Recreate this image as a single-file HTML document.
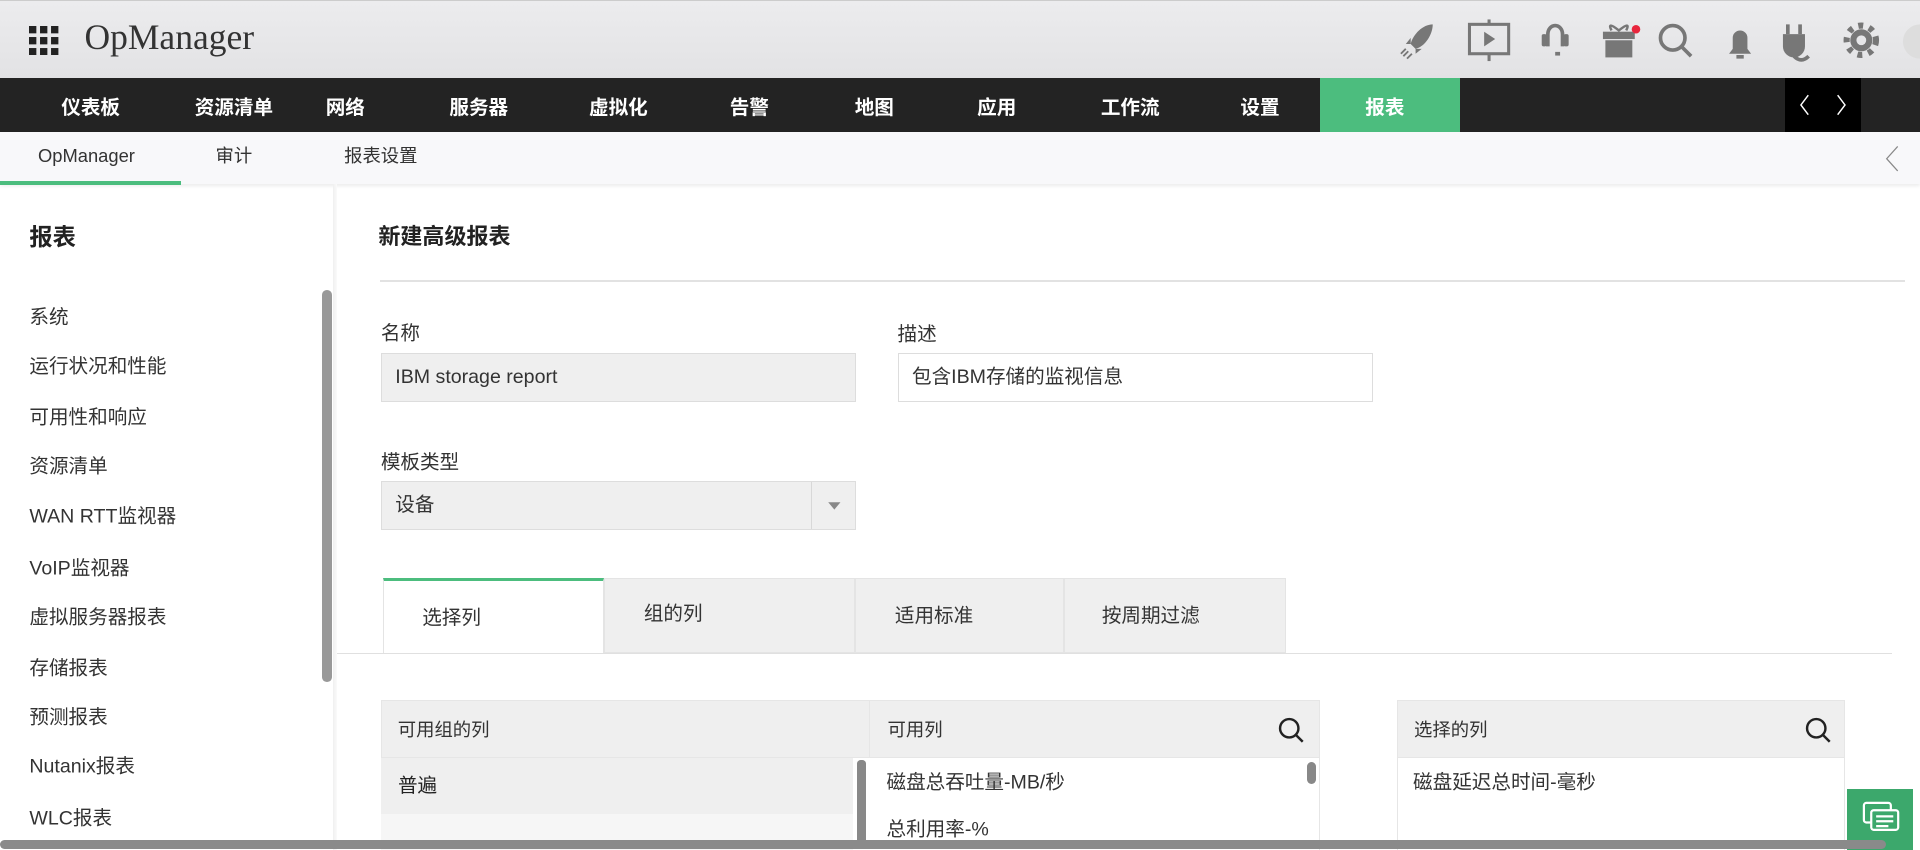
<!DOCTYPE html>
<html><head><meta charset="utf-8"><style>
html,body{margin:0;padding:0;overflow:hidden;background:#fff}
body{width:1920px;height:850px}
#r{zoom:1.22449;width:1568px;height:694px;position:relative;overflow:hidden;font-family:"Liberation Sans","Noto Sans CJK SC",sans-serif;color:#222}
.a{position:absolute}
.hdr{left:0;top:0;width:1568px;height:64px;background:linear-gradient(#ececee,#e2e2e4);border-top:1px solid #ccc}
.nav{left:0;top:64px;width:1568px;height:44px;background:#232323}
.nav span{position:absolute;top:3px;line-height:44px;color:#fff;font-size:16px;transform:translateX(-50%);font-weight:bold}
.sub{left:0;top:108px;width:1568px;height:42px;background:#f8f8fa;box-shadow:0 2px 3px rgba(0,0,0,.08)}
.sub span{position:absolute;top:0;line-height:40px;font-size:15px;color:#333}
.side span{position:absolute;left:24px;font-size:16px;color:#333;transform:translateY(-50%)}
.lbl{font-size:16px;color:#333;transform:translateY(-50%)}
.inp{height:40px;box-sizing:border-box;border:1px solid #ddd;font-size:16px;line-height:38px;padding-left:11px;color:#333}
.tab{top:472px;height:61px;background:#efefef;border:1px solid #e4e4e4;box-sizing:border-box;font-size:16px;color:#333;line-height:62px}
.th{background:#efefef;height:47px;line-height:47px;font-size:15px;color:#333;box-sizing:border-box;border:1px solid #e6e6e6}
</style></head><body><div id="r">
<div class="a hdr"></div>
<svg class="a" style="left:24px;top:21px" width="26" height="24"><g fill="#222"><rect x="0" y="0" width="6" height="6"/><rect x="9" y="0" width="6" height="6"/><rect x="18" y="0" width="6" height="6"/><rect x="0" y="9" width="6" height="6"/><rect x="9" y="9" width="6" height="6"/><rect x="18" y="9" width="6" height="6"/><rect x="0" y="18" width="6" height="6"/><rect x="9" y="18" width="6" height="6"/><rect x="18" y="18" width="6" height="6"/></g></svg>
<div class="a" style="left:69px;top:13px;font-family:'Liberation Serif',serif;font-size:29px;color:#333">OpManager</div>
<svg class="a" style="left:1140px;top:14px" width="430" height="40" fill="#777" stroke="#777">
<path d="M30 6 C22 6 14 14 12 22 L16 26 C24 24 30 14 30 6Z M12 22 L8 22 L12 17Z M16 26 L16 30 L21 26Z" stroke="none"/>
<path d="M10 28 L6 32 M13 30 L9 34 M8 26 L4 30" stroke-width="1.5"/>
<g fill="none" stroke-width="2.5"><rect x="60" y="6" width="32" height="24"/><line x1="76" y1="2" x2="76" y2="6"/><line x1="76" y1="30" x2="76" y2="36"/></g><path d="M72 12 L81 18 L72 24Z" stroke="none"/>
<g fill="none" stroke-width="3"><path d="M124 24 V14 a6 7 0 0 1 12 0 V24"/><path d="M130 30 h4"/></g><rect x="119" y="14" width="4" height="10" rx="1.5" stroke="none"/><rect x="137" y="14" width="4" height="10" rx="1.5" stroke="none"/>
<rect x="169" y="12" width="26" height="6" stroke="none"/><rect x="171" y="19" width="22" height="14" stroke="none"/><path d="M176 11 q-4 -8 6 0 q10 -8 6 0" fill="none" stroke-width="2"/><circle cx="196" cy="10" r="3.5" fill="#e8263d" stroke="none"/>
<g fill="none" stroke-width="3"><circle cx="226" cy="17" r="10"/><line x1="233" y1="24" x2="241" y2="32"/></g>
<path d="M272 30 h18 l-3 -4 v-9 a6 6 0 0 0 -12 0 v9z M278 31 h6 v3 h-6z" stroke="none"/>
<path d="M320 6 v8 M330 6 v8 M325 32 q6 6 12 0" stroke-width="3" fill="none"/><path d="M316 14 h18 v10 a9 9 0 0 1 -18 0z" stroke="none"/>
<circle cx="380" cy="19" r="9" stroke="none"/><circle cx="380" cy="19" r="12" fill="none" stroke-width="5" stroke-dasharray="4 5"/><circle cx="380" cy="19" r="4" fill="#e6e6e8" stroke="none"/>
<circle cx="428" cy="20" r="14" fill="#ddd" stroke="none"/>
</svg>
<div class="a nav"><span style="left:74px">仪表板</span><span style="left:191px">资源清单</span><span style="left:282px">网络</span><span style="left:391px">服务器</span><span style="left:505px">虚拟化</span><span style="left:612px">告警</span><span style="left:714px">地图</span><span style="left:814px">应用</span><span style="left:923px">工作流</span><span style="left:1029px">设置</span>
<div class="a" style="left:1078px;top:0;width:114px;height:44px;background:#4cbd7e"></div><span style="left:1131px">报表</span>
<div class="a" style="left:1458px;top:0;width:62px;height:44px;background:#000"></div>
<svg class="a" style="left:1458px;top:0" width="62" height="44" fill="none" stroke="#fff" stroke-width="1.2"><path d="M19 14 L13 22 L19 30 M43 14 L49 22 L43 30"/></svg></div>
<div class="a sub"><span style="left:31px">OpManager</span><span style="left:176px">审计</span><span style="left:281px">报表设置</span>
<div class="a" style="left:0;top:40px;width:148px;height:3px;background:#4cbd7e"></div>
<svg class="a" style="left:1538px;top:10px" width="14" height="24" fill="none" stroke="#888"><path d="M12 2 L3 12 L12 22"/></svg></div>
<div class="a side" style="left:0;top:150px;width:272px;height:544px">
<div class="a" style="left:24px;top:28px;font-size:19px;font-weight:bold">报表</div>
<span style="top:107px">系统</span><span style="top:147px">运行状况和性能</span><span style="top:189px">可用性和响应</span><span style="top:229px">资源清单</span><span style="top:270px">WAN RTT监视器</span><span style="top:312px">VoIP监视器</span><span style="top:352px">虚拟服务器报表</span><span style="top:394px">存储报表</span><span style="top:434px">预测报表</span><span style="top:474px">Nutanix报表</span><span style="top:516px">WLC报表</span>
<div class="a" style="left:263px;top:87px;width:8px;height:320px;background:#999;border-radius:4px"></div></div>
<div class="a" style="left:272px;top:150px;width:3px;height:544px;background:linear-gradient(90deg,#f0f0f0,#fafafa)"></div>
<div class="a" style="left:309px;top:179px;font-size:18px;font-weight:bold">新建高级报表</div>
<div class="a" style="left:310px;top:229px;width:1246px;height:1px;background:#e2e2e2"></div>
<div class="a lbl" style="left:311px;top:270px">名称</div><div class="a lbl" style="left:733px;top:271px">描述</div>
<div class="a inp" style="left:311px;top:288px;width:388px;background:#efefef">IBM storage report</div>
<div class="a inp" style="left:733px;top:288px;width:388px;background:#fff">包含IBM存储的监视信息</div>
<div class="a lbl" style="left:311px;top:376px">模板类型</div>
<div class="a inp" style="left:311px;top:393px;width:388px;background:#efefef">设备</div>
<div class="a" style="left:662px;top:394px;width:1px;height:38px;background:#d8d8d8"></div>
<svg class="a" style="left:675px;top:409px" width="12" height="8"><path d="M1 1 L11 1 L6 7Z" fill="#888"/></svg>
<div class="a" style="left:275px;top:533px;width:1270px;height:1px;background:#e0e0e0"></div>
<div class="a tab" style="left:313px;width:180px;background:#fff;border-bottom:none;border-top:3px solid #4cbd7e;padding-left:31px">选择列</div>
<div class="a tab" style="left:493px;width:205px;padding-left:32px;line-height:58px">组的列</div>
<div class="a tab" style="left:698px;width:171px;padding-left:32px">适用标准</div>
<div class="a tab" style="left:869px;width:181px;padding-left:30px">按周期过滤</div>
<div class="a th" style="left:311px;top:572px;width:400px;padding-left:13px">可用组的列</div>
<div class="a th" style="left:710px;top:572px;width:368px;padding-left:14px">可用列</div>
<div class="a th" style="left:1141px;top:572px;width:366px;padding-left:13px">选择的列</div>
<svg class="a" style="left:1043px;top:585px" width="24" height="24" fill="none" stroke="#222" stroke-width="2"><circle cx="10" cy="10" r="7.5"/><line x1="15.5" y1="15.5" x2="21" y2="21"/></svg>
<svg class="a" style="left:1473px;top:585px" width="24" height="24" fill="none" stroke="#222" stroke-width="2"><circle cx="10" cy="10" r="7.5"/><line x1="15.5" y1="15.5" x2="21" y2="21"/></svg>
<div class="a" style="left:311px;top:619px;width:386px;height:46px;background:#efefef;font-size:16px;line-height:46px;padding-left:14px;box-sizing:border-box">普遍</div>
<div class="a" style="left:311px;top:665px;width:386px;height:30px;background:#f6f6f6"></div>
<div class="a" style="left:700px;top:621px;width:7px;height:70px;background:#888;border-radius:3px"></div>
<div class="a" style="left:1077px;top:619px;width:1px;height:75px;background:#e6e6e6"></div>
<div class="a" style="left:1141px;top:619px;width:1px;height:75px;background:#e6e6e6"></div>
<div class="a" style="left:1506px;top:619px;width:1px;height:75px;background:#e6e6e6"></div>
<div class="a" style="left:1067px;top:622px;width:8px;height:18px;background:#888;border-radius:4px"></div>
<div class="a lbl" style="left:724px;top:637px">磁盘总吞吐量-MB/秒</div>
<div class="a lbl" style="left:724px;top:675px">总利用率-%</div>
<div class="a lbl" style="left:1154px;top:637px">磁盘延迟总时间-毫秒</div>
<div class="a" style="left:1508px;top:644px;width:54px;height:50px;background:#3ca86c"></div>
<svg class="a" style="left:1518px;top:652px" width="34" height="34" fill="none" stroke="#fff" stroke-width="1.8"><rect x="4" y="4" width="22" height="16" rx="2"/><rect x="10" y="10" width="22" height="16" rx="2" fill="#3ca86c"/><path d="M14 15 h14 M14 19 h14 M14 23 h10"/></svg>
<div class="a" style="left:0;top:686px;width:1540px;height:7px;background:#8a8a8a;border-radius:4px"></div>
</div></body></html>
